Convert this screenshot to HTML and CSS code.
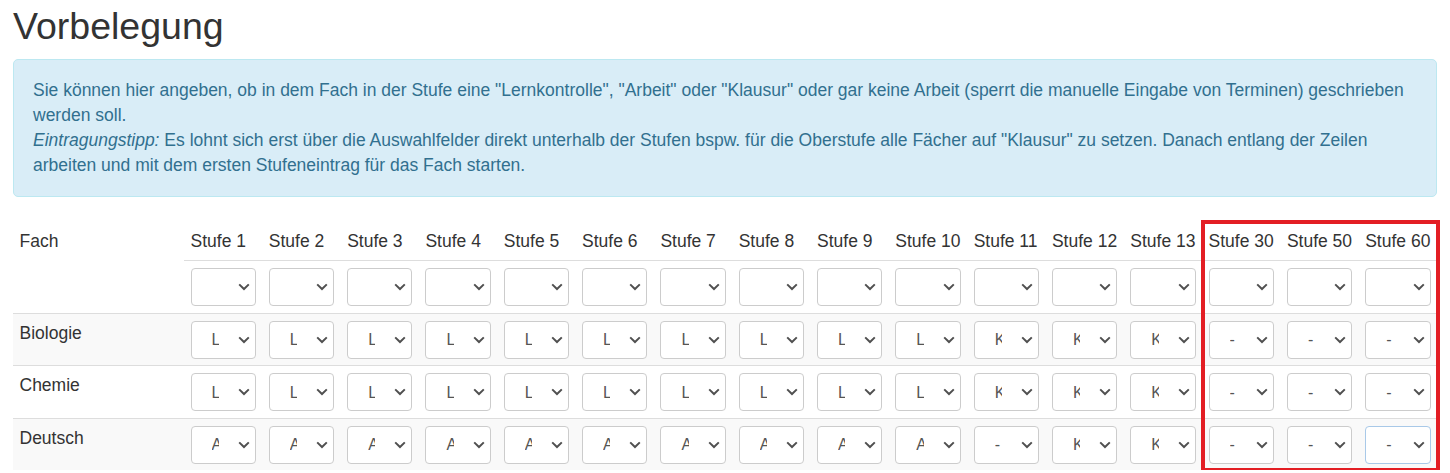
FILE: index.html
```html
<!DOCTYPE html>
<html lang="de">
<head>
  <meta charset="UTF-8" />
  <meta name="viewport" content="width=device-width, initial-scale=1" />
  <title>Vorbelegung</title>
  <link rel="stylesheet" href="styles.css">
</head>
<body>
  <div class="page">
    <h1 class="page-title">Vorbelegung</h1>
    <div class="alert-info">
      Sie können hier angeben, ob in dem Fach in der Stufe eine "Lernkontrolle", "Arbeit" oder "Klausur" oder gar keine Arbeit (sperrt die manuelle Eingabe von Terminen) geschrieben<br>
      werden soll.<br>
      <em>Eintragungstipp:</em> Es lohnt sich erst über die Auswahlfelder direkt unterhalb der Stufen bspw. für die Oberstufe alle Fächer auf "Klausur" zu setzen. Danach entlang der Zeilen<br>
      arbeiten und mit dem ersten Stufeneintrag für das Fach starten.
    </div>

    <div class="table-wrap">
      <table class="vorbelegung">
        <thead>
          <tr id="stufenRow">
            <th rowspan="2" class="fach-head">Fach</th>
          </tr>
          <tr id="allRow"></tr>
        </thead>
        <tbody id="faecherBody"></tbody>
      </table>
      <div class="highlight-box"></div>
    </div>
  </div>

  <script>
    const stufen = [1, 2, 3, 4, 5, 6, 7, 8, 9, 10, 11, 12, 13, 30, 50, 60];
    const faecher = [
      ['Biologie', 'LLLLLLLLLLKKK---'],
      ['Chemie',   'LLLLLLLLLLKKK---'],
      ['Deutsch',  'AAAAAAAAAA-KK---']
    ];
    const labels = { '': '', '-': '-', 'L': 'Lernkontrolle', 'A': 'Arbeit', 'K': 'Klausur' };

    function makeSelect(value) {
      const sel = document.createElement('select');
      sel.className = 'form-select';
      Object.keys(labels).forEach(key => {
        const opt = document.createElement('option');
        opt.value = key;
        opt.textContent = labels[key];
        if (key === value) opt.selected = true;
        sel.appendChild(opt);
      });
      return sel;
    }

    const stufenRow = document.getElementById('stufenRow');
    const allRow = document.getElementById('allRow');
    stufen.forEach(stufe => {
      const th = document.createElement('th');
      th.textContent = 'Stufe ' + stufe;
      stufenRow.appendChild(th);

      const td = document.createElement('th');
      td.className = 'all-cell';
      td.appendChild(makeSelect(''));
      allRow.appendChild(td);
    });

    const body = document.getElementById('faecherBody');
    faecher.forEach(([name, werte]) => {
      const tr = document.createElement('tr');
      const tdName = document.createElement('td');
      tdName.textContent = name;
      tr.appendChild(tdName);
      werte.split('').forEach(w => {
        const td = document.createElement('td');
        td.appendChild(makeSelect(w));
        tr.appendChild(td);
      });
      body.appendChild(tr);
    });

    // last field was just edited
    const all = body.querySelectorAll('select');
    all[all.length - 1].classList.add('focused');
  </script>
</body>
</html>
```
FILE: styles.css
```css
body, html {
  margin: 0;
  padding: 0;
  background: #fff;
}
body {
  font-family: "Liberation Sans", Arial, sans-serif;
  font-size: 17.5px;
  line-height: 25px;
  color: #333;
}
.page {
  padding: 0 13px;
}
.page-title {
  font-size: 37.5px;
  font-weight: 500;
  line-height: 1.1;
  margin: 6px 0 12px;
  color: #333;
}
.alert-info {
  background: #d9edf7;
  border: 1px solid #bce8f1;
  color: #31708f;
  border-radius: 5px;
  padding: 18px 19px;
  margin-bottom: 25px;
}
.alert-info em {
  font-style: italic;
}
.table-wrap {
  position: relative;
}
.vorbelegung {
  width: 100%;
  border-collapse: collapse;
  table-layout: fixed;
}
.vorbelegung th,
.vorbelegung td {
  padding: 7px 6.5px 6.5px;
  text-align: left;
  vertical-align: top;
  font-weight: normal;
  white-space: nowrap;
}
#stufenRow th {
  padding-top: 6.5px;
  padding-bottom: 6.5px;
}
.vorbelegung .fach-head {
  width: 158px;
}
#stufenRow th:not(.fach-head) {
  border-bottom: 1px solid #ddd;
}
#allRow th {
  border-bottom: 1px solid #ddd;
}
.fach-head {
  border-bottom: 1px solid #ddd;
}
.vorbelegung tbody td {
  border-top: 1px solid #ddd;
}
.vorbelegung tbody tr:nth-child(odd) {
  background: #f9f9f9;
}
.form-select {
  display: block;
  width: 100%;
  height: 38px;
  box-sizing: border-box;
  padding: 0 36px 0 20px;
  font-family: "Liberation Sans", Arial, sans-serif;
  font-size: 16px;
  color: #555;
  background-color: #fff;
  background-image: url("data:image/svg+xml,%3Csvg xmlns='http://www.w3.org/2000/svg' width='12' height='8' viewBox='0 0 12 8'%3E%3Cpath d='M1.2 1.4 L6 6 L10.8 1.4' fill='none' stroke='%23505050' stroke-width='2'/%3E%3C/svg%3E");
  background-repeat: no-repeat;
  background-position: right 5px center;
  background-size: 12px 8px;
  border: 1px solid #ccc;
  border-radius: 4px;
  -webkit-appearance: none;
  appearance: none;
  overflow: hidden;
}
.form-select.focused {
  border-color: #a9c9e8;
}
.highlight-box {
  position: absolute;
  left: 1188px;
  top: -2px;
  width: 239px;
  height: 252px;
  box-sizing: border-box;
  border: 4px solid #e31e24;
  pointer-events: none;
}
```
